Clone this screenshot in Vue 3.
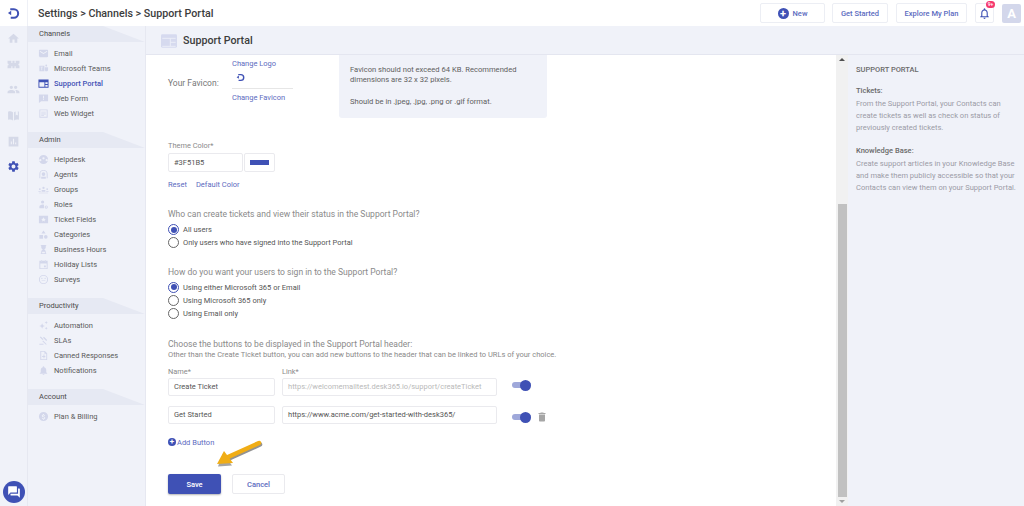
<script setup>
const P = {
  home: 'M10 20v-6h4v6h5v-8h3L12 3 2 12h3v8z',
  mail: 'M20 4H4c-1.1 0-2 .9-2 2v12c0 1.1.9 2 2 2h16c1.1 0 2-.9 2-2V6c0-1.1-.9-2-2-2zm0 4l-8 5-8-5V6l8 5 8-5v2z',
  ticket: 'M1 5h22v5a2 2 0 000 4v5H1v-5a2 2 0 000-4zM8 5v4h2V5zm6 0v4h2V5zM8 15v4h2v-4zm6 0v4h2v-4z',
  people: 'M16 11c1.66 0 3-1.34 3-3s-1.34-3-3-3-3 1.34-3 3 1.34 3 3 3zm-8 0c1.66 0 3-1.34 3-3S9.66 5 8 5 5 6.34 5 8s1.34 3 3 3zm0 2c-2.33 0-7 1.17-7 3.5V19h14v-2.500c0-2.330-4.670-3.500-7-3.500zm8 0c-.29 0-.62.02-.97.05 1.160.84 1.970 1.970 1.970 3.450V19h6v-2.500c0-2.330-4.670-3.500-7-3.500z',
  book: 'M2 5c3-1 6-1 9 1v15c-3-2-6-2-9-1zM13 6c1-.7 2-1.100 3-1.400V12l2-1.500 2 1.500V4.300l2 .7v15c-3-1-6-1-9 1z',
  report: 'M3 3h18v18H3zm4 9v5h2v-5zm4-5v10h2V7zm4 7v3h2v-3z',
  gear: 'M19.140 12.940c.04-.3.06-.61.06-.94 0-.32-.02-.64-.07-.94l2.030-1.580a.49.49 0 00.12-.61l-1.920-3.320a.488.488 0 00-.59-.22l-2.390.96c-.5-.38-1.030-.7-1.620-.94l-.36-2.540a.484.484 0 00-.48-.41h-3.840c-.24 0-.43.17-.47.41l-.36 2.540c-.59.24-1.130.57-1.620.94l-2.390-.96c-.22-.08-.47 0-.59.22L2.740 8.870c-.12.21-.08.47.12.61l2.030 1.580c-.05.3-.09.63-.09.94s.02.64.07.94l-2.030 1.580a.49.49 0 00-.12.61l1.920 3.320c.12.22.37.29.59.22l2.390-.96c.5.38 1.030.7 1.620.94l.36 2.540c.05.24.24.41.48.41h3.840c.24 0 .44-.17.47-.41l.36-2.540c.59-.24 1.130-.56 1.620-.94l2.390.96c.22.08.47 0 .59-.22l1.920-3.320c.12-.22.07-.47-.12-.61l-2.010-1.580zM12 15.600c-1.980 0-3.600-1.620-3.600-3.600s1.620-3.600 3.600-3.600 3.600 1.620 3.600 3.600-1.620 3.600-3.600 3.600z',
  teams: 'M3 6h11v12H3zm5 2H5.500v1.500H7.500V16H9V9.500h2V8zM15 9h6a1 1 0 011 1v5a3 3 0 01-3 3h-3a6 6 0 00-1-3zM18 3.500a2 2 0 110 4 2 2 0 010-4z',
  portal: 'M1 3h22v18H1zm2 6v10h11V9zm13 0v4h5V9zm0 6v4h5v-4z',
  form: 'M2 3h20v15H7l-5 4zm9 3v6h2V6zm0 7.500v2h2v-2z',
  widget: 'M3 3h18v18H3zm2 2v14h14V5zm2 3h10v2H7zm0 4h10v2H7zm0 4h6v1.500H7z',
  globe: 'M12 2a10 10 0 100 20 10 10 0 000-20zm0 5a2.500 2.500 0 110 5 2.500 2.500 0 010-5zM5 11a2.500 2.500 0 110 5 2.500 2.500 0 010-5zm14 0a2.500 2.500 0 110 5 2.500 2.500 0 010-5z',
  agent: 'M12 2a9 9 0 00-9 9v9h2v-9a7 7 0 0114 0v9h2v-9a9 9 0 00-9-9zm0 5a4 4 0 110 8 4 4 0 010-8zm-5 10h10v4H7z',
  groups: 'M12 6a2.500 2.500 0 110 5 2.500 2.500 0 010-5zM8 13h8v4H8zM4 9a2 2 0 110 4 2 2 0 010-4zM1 15h5v2H1zm19-6a2 2 0 110 4 2 2 0 010-4zm-2 6h5v2h-5zM2 19h20v1H2z',
  roles: 'M10 3a3.500 3.500 0 110 7 3.500 3.500 0 010-7zM3 20v-3c0-3 4-5 7-5 1 0 2 .2 3 .6V20zm15-6a3.500 3.500 0 110 7 3.500 3.500 0 010-7zm0 2a1.500 1.500 0 100 3 1.500 1.500 0 000-3z',
  fields: 'M2 4h20v16H2zm10 3l-1.500 3.300-3.500.4 2.600 2.300-.7 3.500 3.100-1.800 3.100 1.800-.7-3.500 2.600-2.300-3.500-.4z',
  cats: 'M12 3l4.500 7h-9zM3 13h8v8H3zm14 0a4 4 0 110 8 4 4 0 010-8z',
  hours: 'M6 2h12v2h-1v3a5 5 0 01-3 4.500V12.500A5 5 0 0117 17v3h1v2H6v-2h1v-3a5 5 0 013-4.500V11.500A5 5 0 017 7V4H6zm3 15v3h6v-3z',
  holiday: 'M3 4h18v18H3zm2 6v10h14V10zM7 2h2v3H7zm8 0h2v3h-2zm-2 12h4v4h-4z',
  survey: 'M12 2a10 10 0 100 20 10 10 0 000-20zm0 2a8 8 0 110 16 8 8 0 010-16zM8.500 8a1.500 1.500 0 100 3 1.500 1.500 0 000-3zm7 0a1.500 1.500 0 100 3 1.500 1.500 0 000-3zM8 14v1.500h8V14z',
  auto: 'M9 7l1.800 4.200L15 13l-4.200 1.800L9 19l-1.800-4.200L3 13l4.200-1.800zM18 2l1 2.500 2.500 1-2.500 1-1 2.500-1-2.500-2.500-1 2.500-1zm0 13l1 2 2 1-2 1-1 2-1-2-2-1 2-1z',
  sla: 'M6 3l6 6-2 2-6-6zm7 1l7 7-2 2-7-7zM11 12l8 8-1.500 1.500-8-8zM3 19h9v2H3z',
  canned: 'M5 2h10l5 5v15H5zm2 2v16h11V8h-4V4zm5 6v3H9v2h3v3h2v-3h2v-2h-2v-3z',
  bell: 'M12 22c1.100 0 2-.9 2-2h-4c0 1.100.89 2 2 2zm6-6v-5c0-3.070-1.640-5.640-4.500-6.320V4c0-.83-.67-1.500-1.500-1.500s-1.500.67-1.500 1.500v.68C7.630 5.360 6 7.920 6 11v5l-2 2v1h16v-1l-2-2z',
  bill: 'M12 2a10 10 0 100 20 10 10 0 000-20zm1 15.500V19h-2v-1.500c-1.500-.3-2.700-1.200-2.800-2.800h1.700c.1.900.8 1.500 2.100 1.500 1.400 0 1.800-.7 1.800-1.200 0-.7-.4-1.300-2.200-1.700-2-.5-3.300-1.300-3.300-3 0-1.400 1.100-2.300 2.700-2.600V6.500h2V8c1.500.4 2.300 1.500 2.400 2.800h-1.700c-.1-.9-.6-1.500-1.700-1.500-1.100 0-1.800.5-1.800 1.200 0 .6.500 1 2.200 1.500 1.800.5 3.300 1.200 3.300 3.200 0 1.500-1.100 2.400-2.700 2.800z'
}
const groups = [
  { title: 'Channels', items: [['Email', 'mail'], ['Microsoft Teams', 'teams'], ['Support Portal', 'portal', true], ['Web Form', 'form'], ['Web Widget', 'widget']] },
  { title: 'Admin', items: [['Helpdesk', 'globe'], ['Agents', 'agent'], ['Groups', 'groups'], ['Roles', 'roles'], ['Ticket Fields', 'fields'], ['Categories', 'cats'], ['Business Hours', 'hours'], ['Holiday Lists', 'holiday'], ['Surveys', 'survey']] },
  { title: 'Productivity', items: [['Automation', 'auto'], ['SLAs', 'sla'], ['Canned Responses', 'canned'], ['Notifications', 'bell']] },
  { title: 'Account', items: [['Plan & Billing', 'bill']] }
]
const railIcons = ['home', 'ticket', 'people', 'book', 'report', 'gear']
const q1 = [['All users', true], ['Only users who have signed into the Support Portal', false]]
const q2 = [['Using either Microsoft 365 or Email', true], ['Using Microsoft 365 only', false], ['Using Email only', false]]
</script>

<template>
  <div class="app">
    <header class="top">
      <div class="logo-cell">
        <svg class="logo" viewBox="0 0 14 14"><path d="M3.500 2.500H7.500a4.500 4.500 0 010 9H4" fill="none" stroke="#3f51b5" stroke-width="2.200"/><path d="M1 6.500l3.500-2.500v5z" fill="#3f51b5"/></svg>
      </div>
      <div class="crumb">Settings &gt; Channels &gt; Support Portal</div>
      <button class="tb new"><span class="plus">+</span>New</button>
      <button class="tb started">Get Started</button>
      <button class="tb explore">Explore My Plan</button>
      <button class="tb bellb">
        <svg viewBox="0 0 24 24" class="bell"><path d="M12 22c1.100 0 2-.9 2-2h-4c0 1.100.89 2 2 2zm6-6v-5c0-3.100-1.600-5.600-4.500-6.300V4c0-.8-.7-1.500-1.500-1.500s-1.500.7-1.500 1.500v.7C7.600 5.400 6 7.900 6 11v5l-2 2v1h16v-1zm-2 1H8v-6c0-2.500 1.500-4.500 4-4.500s4 2 4 4.500z" fill-rule="evenodd" fill="#3f51b5"/></svg>
        <span class="badge">9+</span>
      </button>
      <div class="avatar">A</div>
    </header>

    <div class="body">
      <nav class="rail">
        <svg v-for="(ic, i) in railIcons" :key="ic" viewBox="0 0 24 24" class="rail-ic"><path :d="P[ic]" fill-rule="evenodd" :fill="i === 5 ? '#3f51b5' : '#d5d9e8'"/></svg>
        <div class="spacer"></div>
        <div class="chat">
          <svg viewBox="0 0 24 24"><path d="M21 6h-2v9H6v2c0 .6.4 1 1 1h11l4 4V7c0-.6-.4-1-1-1zm-4 6V3c0-.6-.4-1-1-1H3c-.6 0-1 .4-1 1v14l4-4h10c.6 0 1-.4 1-1z" fill="#fff"/></svg>
        </div>
      </nav>

      <aside class="side">
        <section v-for="g in groups" :key="g.title" class="group">
          <h3 class="ghead">{{ g.title }}</h3>
          <ul class="glist">
            <li v-for="it in g.items" :key="it[0]" class="gitem" :class="{ on: it[2] }">
              <svg viewBox="0 0 24 24" class="gic"><path :d="P[it[1]]" fill-rule="evenodd" :fill="it[2] ? '#3f51b5' : '#d3d7eb'"/></svg>
              <span>{{ it[0] }}</span>
            </li>
          </ul>
        </section>
      </aside>

      <div class="main">
        <div class="band">
          <svg viewBox="0 0 24 24" class="band-ic">
            <rect x="0" y="2" width="24" height="20" rx="2" fill="#d6daef"/>
            <path d="M2 8h20M14 8v12M2 20h20M14 14h8" stroke="#eef0f9" stroke-width="1.300" fill="none"/>
          </svg>
          <span>Support Portal</span>
        </div>
        <div class="work">
          <div class="content">
            <div class="fav-row">
              <span class="fav-label">Your Favicon:</span>
              <div class="fav-col">
                <a class="lnk">Change Logo</a>
                <div class="fav-img">
                  <svg viewBox="0 0 14 14"><path d="M3.500 2.500H7.500a4.500 4.500 0 010 9H4" fill="none" stroke="#3f51b5" stroke-width="2.200"/><path d="M1 6.500l3.500-2.500v5z" fill="#3f51b5"/></svg>
                </div>
                <a class="lnk">Change Favicon</a>
              </div>
              <div class="info">
                <p>Favicon should not exceed 64 KB. Recommended dimensions are 32 x 32 pixels.</p>
                <p>Should be in .jpeg, .jpg, .png or .gif format.</p>
              </div>
            </div>

            <label class="lab theme-lab">Theme Color*</label>
            <div class="theme-row">
              <div class="inp theme-inp">#3F51B5</div>
              <div class="inp swatch"><i></i></div>
            </div>
            <div class="theme-links"><a class="lnk">Reset</a><a class="lnk">Default Color</a></div>

            <p class="q q1">Who can create tickets and view their status in the Support Portal?</p>
            <div v-for="r in q1" :key="r[0]" class="radio" :class="{ sel: r[1] }"><i></i><span>{{ r[0] }}</span></div>

            <p class="q q2">How do you want your users to sign in to the Support Portal?</p>
            <div v-for="r in q2" :key="r[0]" class="radio" :class="{ sel: r[1] }"><i></i><span>{{ r[0] }}</span></div>

            <p class="q q3">Choose the buttons to be displayed in the Support Portal header:</p>
            <p class="sub">Other than the Create Ticket button, you can add new buttons to the header that can be linked to URLs of your choice.</p>

            <div class="btn-grid">
              <label class="lab">Name*</label><label class="lab">Link*</label><span></span><span></span>
              <div class="inp">Create Ticket</div>
              <div class="inp dim">https://welcomemailtest.desk365.io/support/createTicket</div>
              <div class="toggle t1"><i></i></div>
              <span></span>
              <div class="inp row2">Get Started</div>
              <div class="inp row2">https://www.acme.com/get-started-with-desk365/</div>
              <div class="toggle t2"><i></i></div>
              <svg viewBox="0 0 24 24" class="trash"><path d="M6 19c0 1.100.9 2 2 2h8c1.100 0 2-.9 2-2V7H6v12zM19 4h-3.500l-1-1h-5l-1 1H5v2h14V4z" fill="#a6a6a6"/></svg>
            </div>

            <div class="add"><span class="addp">+</span><a class="lnk">Add Button</a></div>

            <div class="actions">
              <button class="save">Save</button>
              <button class="cancel">Cancel</button>
            </div>

            <svg class="arrow" viewBox="0 0 50 30">
              <path d="M45 5L14 19" stroke="#4a4a4a" stroke-opacity=".6" stroke-width="4.500" stroke-linecap="round" transform="translate(1 1.500)"/>
              <path d="M3 27l5-13 9 12z" fill="#4a4a4a" fill-opacity=".5" transform="translate(1 1.500)"/>
              <path d="M45 5L14 19" stroke="#f0ad16" stroke-width="4.500" stroke-linecap="round"/>
              <path d="M3 26l7-13 9 12z" fill="#f0ad16"/>
            </svg>
          </div>

          <div class="sbar">
            <span class="sup"></span>
            <div class="sgap"></div>
            <div class="thumb"></div>
            <span class="sdown"></span>
          </div>

          <aside class="help">
            <h4>SUPPORT PORTAL</h4>
            <h5>Tickets:</h5>
            <p>From the Support Portal, your Contacts can create tickets as well as check on status of previously created tickets.</p>
            <h5 class="kb">Knowledge Base:</h5>
            <p>Create support articles in your Knowledge Base and make them publicly accessible so that your Contacts can view them on your Support Portal.</p>
          </aside>
        </div>
      </div>
    </div>
  </div>
</template>

<style>
html, body { margin: 0; overflow: hidden; }
</style>

<style scoped>
* { box-sizing: border-box; }
.app { width: 1024px; height: 506px; display: flex; flex-direction: column; font-family: Roboto, "Liberation Sans", sans-serif; background: #fff; color: #555; overflow: hidden; }
p, h3, h4, h5, ul { margin: 0; padding: 0; }
button { font-family: inherit; cursor: pointer; }

.top { height: 26px; display: flex; align-items: center; flex: none; background: #fff; }
.logo-cell { width: 28px; height: 26px; display: flex; align-items: center; justify-content: center; border-right: 1px solid #eef0f6; }
.logo { width: 13px; height: 13px; }
.crumb { margin-left: 10px; font-size: 10.700px; font-weight: 500; color: #3c3c3c; flex: 1; }
.tb { height: 20px; background: #fff; border: 1px solid #eceef4; border-radius: 2px; font-size: 7.500px; font-weight: 500; color: #5c6bc0; padding: 0; display: flex; align-items: center; justify-content: center; }
.new { width: 65px; }
.plus { width: 11px; height: 11px; border-radius: 50%; background: #3f51b5; color: #fff; font-size: 11px; line-height: 11px; text-align: center; margin-right: 4px; font-weight: 700; }
.started { width: 56px; margin-left: 7px; }
.explore { width: 71px; margin-left: 8px; }
.bellb { width: 19px; margin-left: 8px; position: relative; }
.bell { width: 13px; height: 13px; }
.badge { position: absolute; top: -3px; right: -2px; width: 9px; height: 7px; border-radius: 4px; background: #f5386e; color: #fff; font-size: 5px; line-height: 7px; text-align: center; }
.avatar { width: 19px; height: 19px; margin: 0 3px 0 8px; background: #d3d7eb; color: #fff; border-radius: 2px; font-size: 13px; font-weight: 700; text-align: center; line-height: 20px; }

.body { flex: 1; display: flex; min-height: 0; }
.rail { width: 28px; background: #f0f2f9; border-right: 1px solid #e6e8f1; display: flex; flex-direction: column; align-items: center; padding-top: 6px; }
.rail-ic { width: 13px; height: 13px; margin-bottom: 12.700px; flex: none; }
.spacer { flex: 1; }
.chat { width: 22px; height: 22px; border-radius: 50%; background: #3f51b5; display: flex; align-items: center; justify-content: center; margin-bottom: 3px; flex: none; }
.chat svg { width: 14px; height: 14px; }

.side { width: 118px; background: #f0f2f9; border-right: 1px solid #e6e8f1; font-size: 7.500px; color: #5a5a5a; }
.group { margin-bottom: 11px; }
.ghead { height: 16px; font-size: 7.500px; font-weight: 400; color: #4a4a4a; line-height: 15px; padding-left: 11px; background: #e6e9f3; clip-path: polygon(0 0, 75px 0, 100% 100%, 0 100%); }
.glist { list-style: none; padding-top: 4px; }
.gitem { height: 15px; display: flex; align-items: center; padding-left: 10px; }
.gitem.on { color: #3f51b5; font-weight: 500; }
.gic { width: 11px; height: 11px; margin-right: 5px; flex: none; }

.main { flex: 1; display: flex; flex-direction: column; min-width: 0; }
.band { height: 29px; flex: none; background: #f0f2f9; border-bottom: 1px solid #e4e6f0; display: flex; align-items: center; padding-left: 15px; padding-top: 1px; font-size: 10.700px; font-weight: 500; color: #3c3c3c; }
.band-ic { width: 16px; height: 16px; margin-right: 6px; }
.work { flex: 1; display: flex; min-height: 0; }

.content { width: 690px; padding-left: 22px; position: relative; flex: none; font-size: 7.500px; }
.fav-row { display: flex; height: 64px; align-items: flex-start; }
.fav-label { width: 64px; margin-top: 22px; font-size: 8.500px; color: #777; line-height: 12px; }
.fav-col { width: 61px; display: flex; flex-direction: column; margin-top: 3px; }
.lnk { color: #5c6bc0; font-size: 7.500px; line-height: 11px; white-space: nowrap; }
.fav-img { height: 20px; border-bottom: 1px solid #e6e6e6; margin-bottom: 3px; padding: 4px 0 0 4px; }
.fav-img svg { width: 9px; height: 9px; display: block; }
.info { width: 208px; height: 63px; margin-left: 46px; background: #f0f2f9; border-radius: 0 0 3px 3px; padding: 9.500px 11px; font-size: 7.600px; line-height: 10.700px; color: #606060; }
.info p + p { margin-top: 10.700px; }

.lab { display: block; font-size: 7.400px; color: #8a8a8a; line-height: 11px; }
.theme-lab { margin-top: 21px; }
.theme-row { display: flex; gap: 1px; margin-top: 2px; }
.inp { height: 19px; border: 1px solid #eaeaee; border-radius: 2px; font-size: 7.500px; line-height: 17px; color: #555; padding-left: 5px; background: #fff; white-space: nowrap; overflow: hidden; }
.theme-inp { width: 75px; }
.swatch { width: 31px; display: flex; align-items: center; justify-content: center; padding: 0; }
.swatch i { width: 19px; height: 5px; background: #3f51b5; display: block; }
.theme-links { display: flex; gap: 9px; margin-top: 7px; }

.q { font-size: 8.550px; color: #8a8a8a; line-height: 12px; }
.q1 { margin-top: 18px; margin-bottom: 3px; }
.q2 { margin-top: 16px; margin-bottom: 3px; }
.q3 { margin-top: 19px; line-height: 10px; }
.sub { font-size: 7.500px; color: #8a8a8a; line-height: 10px; margin-top: 1px; }
.radio { height: 13.300px; display: flex; align-items: center; font-size: 7.500px; color: #555; }
.radio i { width: 11px; height: 11px; border-radius: 50%; border: 1px solid #666; margin-right: 4px; flex: none; position: relative; }
.radio.sel i { border-color: #3f51b5; }
.radio.sel i::after { content: ""; position: absolute; inset: 1.500px; border-radius: 50%; background: #3f51b5; }

.btn-grid { display: grid; grid-template-columns: 107px 215px 30px 20px; column-gap: 7px; margin-top: 6px; align-items: center; }
.btn-grid .lab { margin-bottom: 1px; }
.btn-grid .inp { height: 18px; line-height: 16px; padding-left: 5px; }
.dim { color: #b9b9b9; }
.row2 { margin-top: 10px; }
.toggle { width: 19px; height: 6px; background: #9fa8da; border-radius: 3px; position: relative; margin-left: 8px; }
.toggle i { position: absolute; right: 0; top: -2.500px; width: 11px; height: 11px; border-radius: 50%; background: #3f51b5; }
.t1 { margin-top: -4px; }
.t2 { margin-top: 14px; }
.trash { width: 12px; height: 12px; margin-top: 14px; margin-left: -5px; }

.add { display: flex; align-items: center; margin-top: 12.500px; height: 11px; }
.addp { width: 8px; height: 8px; border-radius: 50%; background: #3f51b5; color: #fff; font-size: 8px; line-height: 8px; text-align: center; font-weight: 700; margin-right: 1px; }
.actions { display: flex; gap: 11px; margin-top: 26.500px; }
.save, .cancel { width: 53px; height: 20px; border-radius: 2px; font-size: 7.500px; font-weight: 500; padding: 0; }
.save { background: #3f51b5; color: #fff; border: none; box-shadow: 0 1px 2px rgba(0,0,0,.3); }
.cancel { background: #fff; color: #5c6bc0; border: 1px solid #eaeaee; }
.arrow { position: absolute; left: 68px; top: 383px; width: 50px; height: 30px; }

.sbar { width: 12px; background: #f1f1f1; display: flex; flex-direction: column; align-items: center; flex: none; }
.sup { width: 0; height: 0; border: 3px solid transparent; border-top: 0; border-bottom: 3px solid #505050; margin-top: 3px; }
.sgap { height: 143px; }
.thumb { width: 9px; flex: 1; background: #c1c1c1; }
.sdown { width: 0; height: 0; border: 3px solid transparent; border-bottom: 0; border-top: 3px solid #a0a0a0; margin: 3px 0; }

.help { flex: 1; background: #f0f2f9; padding: 10px 8px; font-size: 7.550px; line-height: 12px; color: #9b9ba6; }
.help h4 { font-size: 7.500px; font-weight: 500; color: #6a6a6a; line-height: 10px; margin-bottom: 10px; }
.help h5 { font-size: 7.500px; font-weight: 500; color: #6a6a6a; line-height: 11px; margin-bottom: 2px; }
.help .kb { margin-top: 10.500px; }
</style>
